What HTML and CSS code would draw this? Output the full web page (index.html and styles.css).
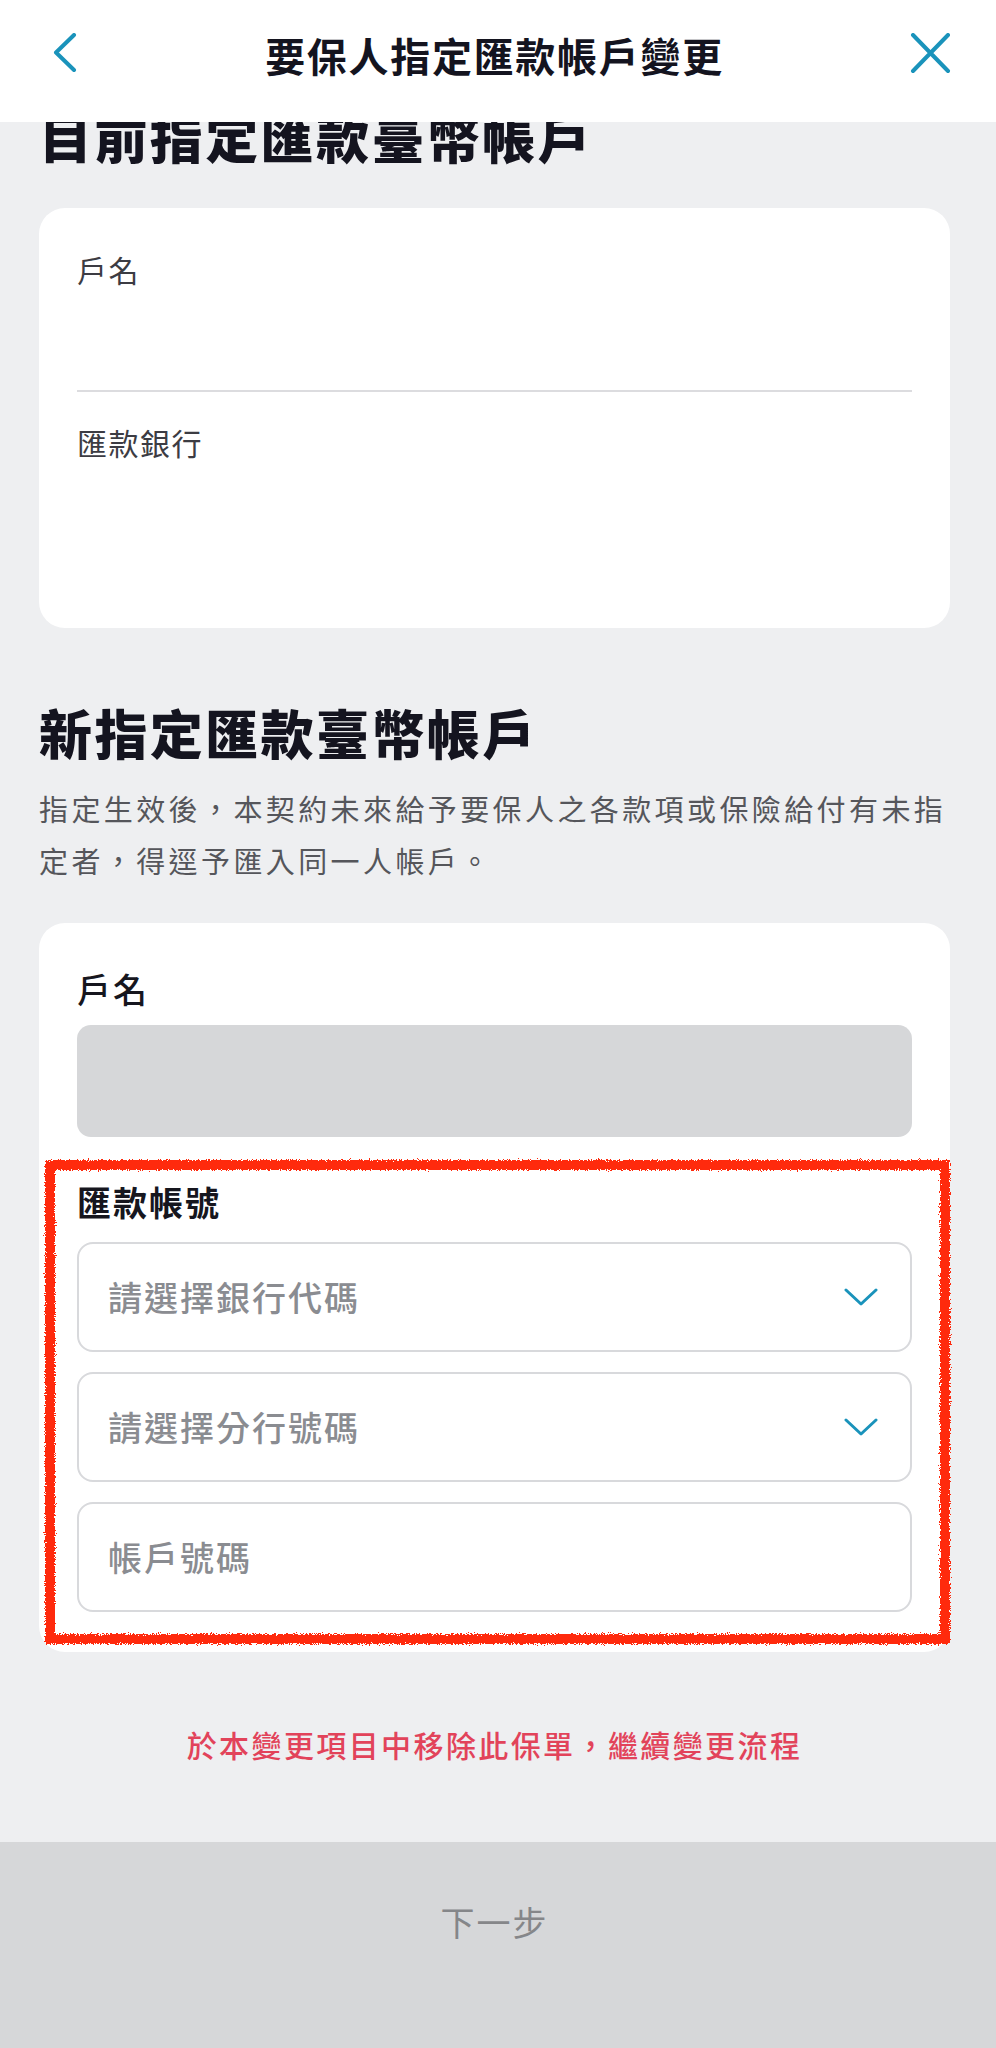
FILE: index.html
```html
<!DOCTYPE html>
<html lang="zh-Hant">
<head>
<meta charset="utf-8">
<title>要保人指定匯款帳戶變更</title>
<link rel="stylesheet" href="styles.css">
</head>
<body>
<svg class="svg-defs" width="0" height="0" aria-hidden="true">
  <filter id="crayon" x="-5%" y="-5%" width="110%" height="110%">
    <feTurbulence type="fractalNoise" baseFrequency="0.9" numOctaves="2" seed="3" result="noise"/>
    <feDisplacementMap in="SourceGraphic" in2="noise" scale="6" xChannelSelector="R" yChannelSelector="G"/>
  </filter>
</svg>

<header class="appbar">
  <button class="icon-btn back" aria-label="返回">
    <svg width="28" height="44" viewBox="0 0 28 44"><path d="M22 2 L4 19.5 L22 37" fill="none" stroke="#1a93bb" stroke-width="4" stroke-linecap="round" stroke-linejoin="round"/></svg>
  </button>
  <h1 class="appbar-title">要保人指定匯款帳戶變更</h1>
  <button class="icon-btn close" aria-label="關閉">
    <svg width="44" height="44" viewBox="0 0 44 44"><path d="M3 2 L38 38 M38 2 L3 38" fill="none" stroke="#1a93bb" stroke-width="4" stroke-linecap="round"/></svg>
  </button>
</header>

<main class="page">
  <h2 class="section-title">目前指定匯款臺幣帳戶</h2>
  <section class="card current">
    <div class="info-row first">
      <div class="info-label">戶名</div>
      <div class="info-value"></div>
    </div>
    <div class="info-row second">
      <div class="info-label">匯款銀行</div>
      <div class="info-value"></div>
    </div>
  </section>

  <h2 class="section-title new">新指定匯款臺幣帳戶</h2>
  <p class="section-desc">指定生效後，本契約未來給予要保人之各款項或保險給付有未指定者，得逕予匯入同一人帳戶。</p>

  <section class="card form">
    <div class="form-field">
      <div class="form-label">戶名</div>
      <div class="input disabled"></div>
    </div>
    <div class="form-group highlight">
      <div class="form-label strong">匯款帳號</div>
      <div class="select">
        <span class="placeholder">請選擇銀行代碼</span>
        <svg class="chev" width="34" height="20" viewBox="0 0 34 20"><path d="M2 3 L17 17 L32 3" fill="none" stroke="#1a93bb" stroke-width="3" stroke-linecap="round" stroke-linejoin="round"/></svg>
      </div>
      <div class="select">
        <span class="placeholder">請選擇分行號碼</span>
        <svg class="chev" width="34" height="20" viewBox="0 0 34 20"><path d="M2 3 L17 17 L32 3" fill="none" stroke="#1a93bb" stroke-width="3" stroke-linecap="round" stroke-linejoin="round"/></svg>
      </div>
      <div class="select text">
        <span class="placeholder">帳戶號碼</span>
      </div>
    </div>
  </section>

  <p class="remove-link">於本變更項目中移除此保單，繼續變更流程</p>
</main>

<footer class="action-bar">
  <button class="next-btn">下一步</button>
</footer>
</body>
</html>
```

FILE: styles.css
```css
* { box-sizing: border-box; }

html, body {
  margin: 0;
  padding: 0;
}

body {
  background: #eeeff1;
  font-family: "Noto Sans CJK TC", "Noto Sans", sans-serif;
  color: #14141f;
  min-height: 2048px;
}

.svg-defs {
  position: absolute;
  width: 0;
  height: 0;
  overflow: hidden;
}

/* ---------- App bar ---------- */
.appbar {
  position: fixed;
  top: 0;
  left: 0;
  right: 0;
  height: 122px;
  z-index: 10;
  background: #ffffff;
  display: grid;
  grid-template-columns: 1fr auto 1fr;
  align-items: center;
  padding: 0 46px 12px 39px;
}

.icon-btn {
  background: none;
  border: 0;
  padding: 0;
  display: flex;
  align-items: center;
  cursor: pointer;
}

.icon-btn.back {
  justify-self: start;
  margin-left: 13px;
}

.icon-btn.close {
  justify-self: end;
  margin-right: -4px;
}

.appbar-title {
  margin: 0;
  font-size: 40px;
  line-height: 52px;
  font-weight: 700;
  letter-spacing: 1.7px;
  color: #14141f;
}

/* ---------- Page ---------- */
.page {
  padding: 104px 46px 0 39px;
}

.section-title {
  margin: 0;
  font-size: 53px;
  line-height: 64px;
  font-weight: 900;
  letter-spacing: 2.4px;
  color: #14141f;
}

.section-title.new {
  margin-top: 72px;
}

.section-desc {
  margin: 18px 0 0;
  font-size: 29px;
  line-height: 52px;
  letter-spacing: 3.4px;
  color: #55565b;
}

.card {
  background: #ffffff;
  border-radius: 26px;
  padding: 0 38px;
}

.card.current {
  margin-top: 40px;
}

.info-row.first {
  height: 184px;
  padding-top: 40px;
  border-bottom: 2px solid #dcdcdf;
}

.info-row.second {
  height: 236px;
  padding-top: 29px;
}

.info-label {
  font-size: 30px;
  line-height: 42px;
  letter-spacing: 1.5px;
  color: #3c3c43;
}

/* ---------- Form card ---------- */
.card.form {
  margin-top: 37px;
}

.form-field {
  padding-top: 43px;
}

.form-label {
  font-size: 34px;
  line-height: 46px;
  font-weight: 500;
  letter-spacing: 2px;
  color: #16161e;
}

.form-label.strong {
  font-weight: 700;
}

.input.disabled {
  margin-top: 13px;
  height: 112px;
  border-radius: 14px;
  background: #d6d7d9;
}

.form-group {
  position: relative;
  padding: 42px 0 40px;
  display: flex;
  flex-direction: column;
  gap: 20px;
}

.form-group .form-label {
  margin-bottom: -3px;
}

.form-group.highlight::after {
  content: "";
  position: absolute;
  top: 23px;
  bottom: 8px;
  left: -32px;
  right: -38px;
  border: 10px solid #ff2a0a;
  filter: url(#crayon);
  pointer-events: none;
}

.select {
  height: 110px;
  border: 2px solid #d8d9dc;
  border-radius: 16px;
  background: #ffffff;
  display: flex;
  align-items: center;
  justify-content: space-between;
  padding: 0 32px 0 29px;
}

.placeholder {
  font-size: 34px;
  line-height: 46px;
  font-weight: 500;
  letter-spacing: 2px;
  color: #8a8c91;
}

.chev {
  display: block;
}

/* ---------- Remove link ---------- */
.remove-link {
  margin: 71px 0 0;
  text-align: center;
  font-size: 30px;
  line-height: 42px;
  font-weight: 500;
  letter-spacing: 2.4px;
  color: #e2435a;
}

/* ---------- Bottom action bar ---------- */
.action-bar {
  position: fixed;
  left: 0;
  right: 0;
  bottom: 0;
  height: 206px;
  background: #d6d7d9;
  padding: 57px 46px 0 39px;
}

.next-btn {
  display: block;
  width: 100%;
  background: none;
  border: 0;
  padding: 0;
  font-family: inherit;
  font-size: 34px;
  line-height: 46px;
  letter-spacing: 2px;
  color: #858689;
  text-align: center;
}
```
